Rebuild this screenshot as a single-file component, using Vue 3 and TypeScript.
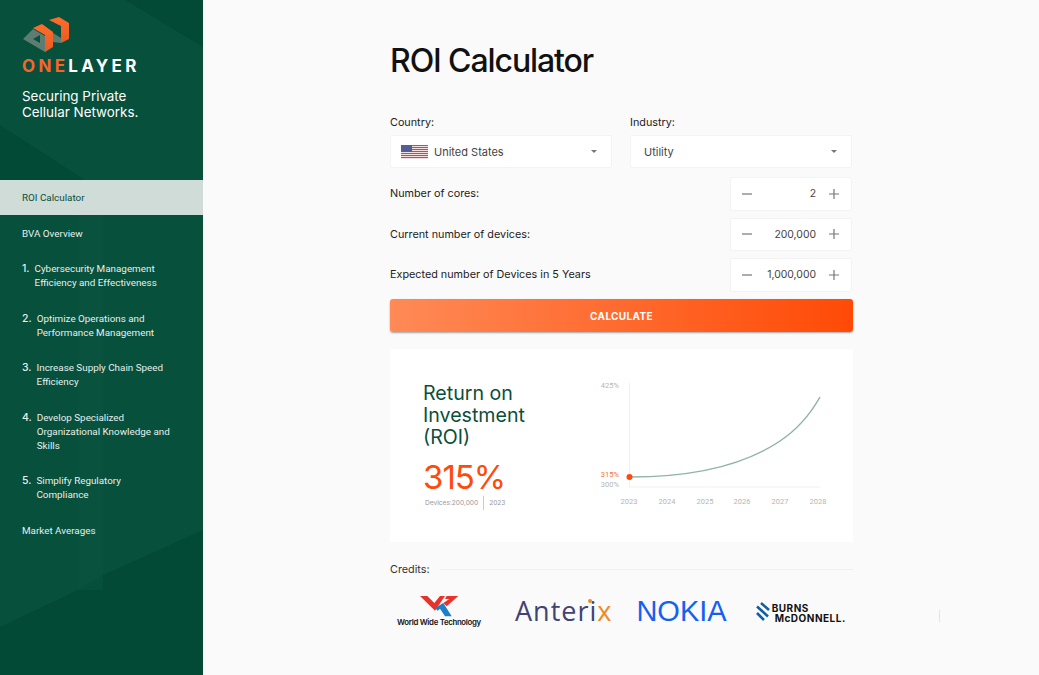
<script setup lang="ts">
interface NavItem {
  num: string;
  lines: string[];
}

const steps: NavItem[] = [
  { num: "1.", lines: ["Cybersecurity Management", "Efficiency and Effectiveness"] },
  { num: "2.", lines: ["Optimize Operations and", "Performance Management"] },
  { num: "3.", lines: ["Increase Supply Chain Speed", "Efficiency"] },
  { num: "4.", lines: ["Develop Specialized", "Organizational Knowledge and", "Skills"] },
  { num: "5.", lines: ["Simplify Regulatory", "Compliance"] },
];

const counters = [
  { label: "Number of cores:", value: "2" },
  { label: "Current number of devices:", value: "200,000" },
  { label: "Expected number of Devices in 5 Years", value: "1,000,000" },
];

const years = [
  { label: "2023", x: 34 },
  { label: "2024", x: 72 },
  { label: "2025", x: 110 },
  { label: "2026", x: 147 },
  { label: "2027", x: 185 },
  { label: "2028", x: 223 },
];

const stripes = [0, 2, 4, 6, 8, 10, 12];
</script>

<template>
  <div class="page">
    <aside class="sidebar">
      <svg class="sidebar-bg" width="203" height="675" viewBox="0 0 203 675">
        <polygon points="125,0 203,0 203,47" fill="#024a36" />
        <polygon points="0,125 85,180 0,180" fill="#024a36" />
        <polygon points="0,627 78,590 103,575 203,530 203,675 0,675" fill="#024a36" />
        <rect x="78" y="215" width="25" height="375" fill="#0d5843" opacity="0.35" />
      </svg>

      <div class="brand">
        <svg class="brand-mark" width="48" height="36" viewBox="0 0 48 36">
          <defs>
            <linearGradient id="mark" x1="0" y1="0" x2="0" y2="1">
              <stop offset="0" stop-color="#ff6d2b" />
              <stop offset="1" stop-color="#ea5a22" />
            </linearGradient>
          </defs>
          <path d="M1 22L11 12L23 19V35ZM11 22L18 26V18Z" fill="#5d7d72" fill-rule="evenodd" />
          <polygon points="31,16 39,21 39,26 31,25" fill="#5d7d72" />
          <polygon points="11,11 20,7 31,15 31,30 23,35 23,18" fill="url(#mark)" />
          <polygon points="27,3 37,0 47,6 47,22 39,26 39,9" fill="url(#mark)" />
        </svg>
        <div class="wordmark"><span class="one">ONE</span>LAYER</div>
        <p class="tagline">Securing Private<br />Cellular Networks.</p>
      </div>

      <nav class="nav">
        <a class="nav-item active">ROI Calculator</a>
        <a class="nav-item">BVA Overview</a>
        <a v-for="step in steps" :key="step.num" class="nav-step">
          <span class="step-num">{{ step.num }}</span>
          <span class="step-text">
            <span v-for="line in step.lines" :key="line" class="step-line">{{ line }}</span>
          </span>
        </a>
        <a class="nav-item last">Market Averages</a>
      </nav>
    </aside>

    <main class="main">
      <div class="content">
        <h1>ROI Calculator</h1>

        <div class="selects">
          <div class="field">
            <label>Country:</label>
            <div class="select flagged">
              <svg class="flag" width="27" height="14" viewBox="0 0 27 14">
                <rect width="27" height="14" fill="#f3dfe0" />
                <rect v-for="s in stripes" :key="s" :y="s" width="27" height="1" fill="#c8475a" />
                <rect width="11" height="7" fill="#525f96" />
              </svg>
              <span>United States</span>
              <i class="caret"></i>
            </div>
          </div>
          <div class="field">
            <label>Industry:</label>
            <div class="select">
              <span>Utility</span>
              <i class="caret"></i>
            </div>
          </div>
        </div>

        <div class="counters">
          <div v-for="row in counters" :key="row.label" class="counter-row">
            <span class="counter-label">{{ row.label }}</span>
            <div class="stepper">
              <svg width="10" height="10" viewBox="0 0 10 10"><path d="M0 5h10" stroke="#777" stroke-width="1.2" /></svg>
              <span class="value">{{ row.value }}</span>
              <svg width="10" height="10" viewBox="0 0 10 10"><path d="M0 5h10M5 0v10" stroke="#777" stroke-width="1.2" /></svg>
            </div>
          </div>
        </div>

        <button class="calc">CALCULATE</button>

        <section class="card">
          <div class="summary">
            <h2>Return on<br />Investment<br />(ROI)</h2>
            <div class="percent">315%</div>
            <div class="meta">
              <span>Devices:200,000</span>
              <i></i>
              <span>2023</span>
            </div>
          </div>
          <svg class="chart" width="240" height="135" viewBox="0 0 240 135">
            <path d="M34.5 7V111M34 111H225" stroke="#f1f1f1" fill="none" />
            <path d="M35 101C90 101 145 92 185 65C203 53 216 37 225 21" stroke="#8fb3a6" stroke-width="1.5" fill="none" />
            <circle cx="34.5" cy="101" r="3" fill="#ff4a0a" />
            <text x="24" y="12" text-anchor="end" class="tick">425%</text>
            <text x="24" y="101" text-anchor="end" class="tick hot">315%</text>
            <text x="24" y="111" text-anchor="end" class="tick">300%</text>
            <text v-for="y in years" :key="y.label" :x="y.x" y="128" text-anchor="middle" class="tick">{{ y.label }}</text>
          </svg>
        </section>

        <div class="credits">
          <span>Credits:</span>
          <i></i>
        </div>

        <div class="logos">
          <div class="wwt">
            <svg width="39" height="22" viewBox="0 0 39 22">
              <polygon points="0,1 7.3,1 14.3,8 20,1 25,1 15,15.7" fill="#e8332a" />
              <polygon points="26.7,1 38.3,1 26.7,11.3 23.3,8 29.3,4 25,4" fill="#e8332a" />
              <polygon points="15,13 23.3,8 31.7,21.3 25,21.3 20,13.7 17.7,15.7" fill="#1f7fc4" />
            </svg>
            <span>World Wide Technology</span>
          </div>
          <div class="anterix">Anteri<span>x</span><i class="dot"></i></div>
          <div class="nokia">NOKIA</div>
          <div class="burns">
            <svg width="14" height="19" viewBox="0 0 14 19">
              <path d="M5 1l8 7M1 4.500l11 10M1 11l7 7" stroke="#0f5fa6" stroke-width="2.600" fill="none" />
            </svg>
            <div class="burns-text">BURNS<br /><span>McDONNELL.</span></div>
          </div>
          <i class="stray"></i>
        </div>
      </div>
    </main>
  </div>
</template>

<style>
html,
body {
  margin: 0;
  background: #fafafa;
}
</style>

<style scoped>
.page {
  display: flex;
  width: 1039px;
  height: 675px;
  overflow: hidden;
  background: #fafafa;
  font-family: "Inter", sans-serif;
}

.sidebar {
  position: relative;
  width: 203px;
  flex-shrink: 0;
  background: #07503c;
  color: #e6efec;
  overflow: hidden;
}

.sidebar-bg {
  position: absolute;
  top: 0;
  left: 0;
}

.brand {
  position: relative;
  height: 180px;
  box-sizing: border-box;
  padding: 17px 0 0 22px;
}

.brand-mark {
  display: block;
}

.wordmark {
  margin-top: 4px;
  font-size: 17px;
  line-height: 18px;
  font-weight: 700;
  letter-spacing: 3.3px;
  color: #fff;
}

.one {
  color: #f9642a;
}

.tagline {
  margin: 13px 0 0;
  font-size: 13.4px;
  line-height: 16px;
  color: #fff;
}

.nav {
  position: relative;
  display: flex;
  flex-direction: column;
  font-family: "Roboto", sans-serif;
  font-size: 9.85px;
  line-height: 14px;
}

.nav-item {
  padding: 11px 22px 10px;
}

.active {
  background: #cfdcd8;
  color: #0b4f3a;
}

.active + .nav-item {
  padding-top: 12px;
}

.nav-step {
  display: flex;
  gap: 5px;
  padding: 0 22px;
  margin-top: 11px;
  margin-bottom: 10.5px;
}

.step-num {
  font-family: "Inter", sans-serif;
  font-size: 10.5px;
  font-weight: 500;
  flex-shrink: 0;
}

.step-line {
  display: block;
}

.main {
  flex: 1;
  padding-left: 187px;
}

.content {
  width: 463px;
}

h1 {
  margin: 0;
  padding-top: 41px;
  font-size: 32px;
  line-height: 40px;
  font-weight: 500;
  letter-spacing: -1.1px;
  color: #111;
}

.selects {
  display: flex;
  gap: 18px;
  width: 462px;
  margin-top: 34px;
}

.field {
  flex: 1;
}

.field label {
  display: block;
  height: 20px;
  font-size: 10.8px;
  line-height: 16px;
  color: #222;
}

.select {
  display: flex;
  align-items: center;
  gap: 6px;
  box-sizing: border-box;
  height: 33px;
  padding: 0 14px 0 13px;
  background: #fff;
  border: 1px solid #f3f3f3;
  border-radius: 2px;
  font-size: 11px;
  color: #444;
}

.flagged {
  padding-left: 10px;
}

.caret {
  margin-left: auto;
  border-left: 3.5px solid transparent;
  border-right: 3.5px solid transparent;
  border-top: 3.5px solid #777;
}

.counters {
  display: flex;
  flex-direction: column;
  gap: 7px;
  width: 462px;
  margin-top: 9px;
}

.counter-row {
  display: flex;
  align-items: center;
  justify-content: space-between;
}

.counter-label {
  font-size: 10.8px;
  color: #222;
}

.stepper {
  display: flex;
  align-items: center;
  box-sizing: border-box;
  width: 122px;
  height: 33.5px;
  padding: 0 12px 0 11px;
  background: #fff;
  border: 1px solid #f3f3f3;
  border-radius: 2px;
}

.value {
  flex: 1;
  padding-right: 13px;
  text-align: right;
  font-size: 10.4px;
  color: #444;
}

.calc {
  display: block;
  width: 463px;
  height: 33px;
  margin-top: 7.5px;
  border: 0;
  border-radius: 3px;
  background: linear-gradient(90deg, #ff8a57, #ff4a06);
  box-shadow: 0 1px 2px rgba(0, 0, 0, 0.35);
  color: #fff;
  font-family: "Inter", sans-serif;
  font-size: 10px;
  font-weight: 700;
  letter-spacing: 0.35px;
}

.card {
  display: flex;
  box-sizing: border-box;
  height: 193px;
  margin-top: 17px;
  padding: 27px 0 0 33px;
  background: #fff;
}

.summary {
  width: 172px;
  flex-shrink: 0;
}

h2 {
  margin: 6px 0 0;
  font-size: 19.6px;
  line-height: 22px;
  font-weight: 400;
  color: #0b4f3a;
}

.percent {
  margin-top: 9px;
  font-size: 33px;
  line-height: 40px;
  letter-spacing: -1px;
  color: #ff4a0a;
}

.meta {
  display: flex;
  align-items: center;
  gap: 5px;
  margin-top: -1px;
  padding-left: 2px;
  font-size: 6.6px;
  color: #999;
}

.meta i {
  width: 1px;
  height: 14px;
  background: #ccc;
}

.chart {
  display: block;
}

.tick {
  font-family: "Roboto", sans-serif;
  font-size: 7.5px;
  fill: #b5b5b5;
}

.hot {
  fill: #ff6a33;
}

.credits {
  display: flex;
  align-items: center;
  gap: 10px;
  margin-top: 21px;
  font-size: 10.8px;
  color: #333;
}

.credits i {
  flex: 1;
  height: 1px;
  background: #f0f0f0;
}

.logos {
  display: flex;
  align-items: center;
  width: 550px;
  height: 40px;
  margin-top: 15px;
}

.wwt {
  display: flex;
  flex-direction: column;
  align-items: center;
  width: 98px;
  font-size: 7.8px;
  line-height: 10px;
  font-weight: 600;
  letter-spacing: -0.3px;
  color: #111;
  white-space: nowrap;
}

.anterix {
  position: relative;
  margin: -2px 0 0 27px;
  font-family: "Open Sans", sans-serif;
  font-size: 27px;
  color: #3f4475;
  letter-spacing: 1px;
}

.anterix span {
  color: #f08a24;
}

.dot {
  position: absolute;
  left: 73px;
  top: 7px;
  width: 4px;
  height: 4px;
  border-radius: 50%;
  background: #f08a24;
}

.nokia {
  margin-left: 24px;
  font-family: "Liberation Sans", sans-serif;
  font-size: 29px;
  color: #1460f0;
}

.burns {
  display: flex;
  align-items: center;
  gap: 2px;
  margin-left: 29px;
}

.burns-text {
  margin-top: 4px;
  font-size: 10px;
  line-height: 10px;
  font-weight: 700;
  letter-spacing: 0.5px;
  color: #111;
}

.burns-text span {
  margin-left: 3px;
}

.stray {
  width: 1px;
  height: 12px;
  margin: 10px 0 0 auto;
  background: #e4e4e4;
}
</style>
